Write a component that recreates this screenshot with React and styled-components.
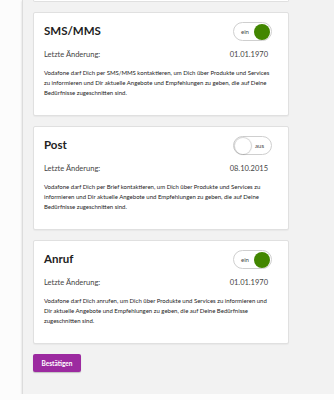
import React from 'react';
import styled, { createGlobalStyle } from 'styled-components';

const GlobalStyle = createGlobalStyle`
  html, body {
    margin: 0;
    padding: 0;
    background: #fcfcfc;
    font-family: Lato, "Open Sans", sans-serif;
    color: #333;
  }
`;

const Page = styled.div`
  padding-left: 22px;
  width: 334px;
  box-sizing: border-box;
  overflow: hidden;
`;

const Panel = styled.div`
  background: #f2f2f2;
  border-left: 1px solid #dcdcdc;
  box-shadow: 0 1px 2px rgba(0, 0, 0, 0.18);
  padding: 0 45px 22px 10px;
  display: flex;
  flex-direction: column;
  gap: 10px;
`;

const CardTail = styled.div`
  height: 1px;
  background: #fff;
  border: 1px solid #e0e0e0;
  border-top: none;
  border-radius: 0 0 2px 2px;
`;

const Card = styled.section`
  background: #fff;
  border: 1px solid #e0e0e0;
  border-radius: 2px;
  box-shadow: 0 1px 1px rgba(0, 0, 0, 0.04);
  padding: 9px 16px 19px 10px;
  height: 104px;
  box-sizing: border-box;
`;

const CardHeader = styled.div`
  display: flex;
  justify-content: space-between;
  align-items: flex-start;
`;

const Title = styled.h3`
  margin: 2px 0 0;
  font-size: 11.5px;
  font-weight: 700;
  color: #222;
`;

const Toggle = styled.div`
  width: 39px;
  height: 19px;
  box-sizing: border-box;
  border: 1px solid #cfcfcf;
  border-radius: 10px;
  background: #fff;
  display: flex;
  align-items: center;
  flex-direction: ${p => (p.$on ? 'row' : 'row-reverse')};
  justify-content: space-between;
  padding-left: ${p => (p.$on ? '7px' : '1px')};
  padding-right: ${p => (p.$on ? '1px' : '7px')};
`;

const ToggleLabel = styled.span`
  font-size: 6px;
  color: #444;
`;

const Knob = styled.span`
  width: 16px;
  height: 16px;
  border-radius: 50%;
  background: ${p => (p.$on ? '#428600' : '#fff')};
  box-shadow: ${p => (p.$on ? 'none' : '0 0 1px 1px rgba(0,0,0,0.18)')};
`;

const MetaRow = styled.div`
  display: flex;
  justify-content: space-between;
  margin: 9px 4px 0 0;
  font-size: 7.5px;
  color: #444;
`;

const Description = styled.p`
  margin: 9px 0 0;
  font-size: 6px;
  line-height: 10px;
  color: #222;
`;

const ConfirmButton = styled.button`
  align-self: flex-start;
  width: 48px;
  height: 18px;
  border: none;
  border-radius: 2px;
  background: #9c2aa0;
  color: #fff;
  font-family: Lato, sans-serif;
  font-weight: 700;
  font-size: 6.5px;
  padding: 0;
  box-shadow: 0 1px 1px rgba(0, 0, 0, 0.2);
`;

const channels = [
  {
    title: 'SMS/MMS',
    on: true,
    date: '01.01.1970',
    text: 'Vodafone darf Dich per SMS/MMS kontaktieren, um Dich über Produkte und Services zu informieren und Dir aktuelle Angebote und Empfehlungen zu geben, die auf Deine Bedürfnisse zugeschnitten sind.'
  },
  {
    title: 'Post',
    on: false,
    date: '08.10.2015',
    text: 'Vodafone darf Dich per Brief kontaktieren, um Dich über Produkte und Services zu informieren und Dir aktuelle Angebote und Empfehlungen zu geben, die auf Deine Bedürfnisse zugeschnitten sind.'
  },
  {
    title: 'Anruf',
    on: true,
    date: '01.01.1970',
    text: 'Vodafone darf Dich anrufen, um Dich über Produkte und Services zu informieren und Dir aktuelle Angebote und Empfehlungen zu geben, die auf Deine Bedürfnisse zugeschnitten sind.'
  }
];

const App = () => (
  <>
    <GlobalStyle />
    <Page>
      <Panel>
        <CardTail />
        {channels.map(c => (
          <Card key={c.title}>
            <CardHeader>
              <Title>{c.title}</Title>
              <Toggle $on={c.on}>
                <ToggleLabel>{c.on ? 'ein' : 'aus'}</ToggleLabel>
                <Knob $on={c.on} />
              </Toggle>
            </CardHeader>
            <MetaRow>
              <span>Letzte Änderung:</span>
              <span>{c.date}</span>
            </MetaRow>
            <Description>{c.text}</Description>
          </Card>
        ))}
        <ConfirmButton>Bestätigen</ConfirmButton>
      </Panel>
    </Page>
  </>
);

export default App;
